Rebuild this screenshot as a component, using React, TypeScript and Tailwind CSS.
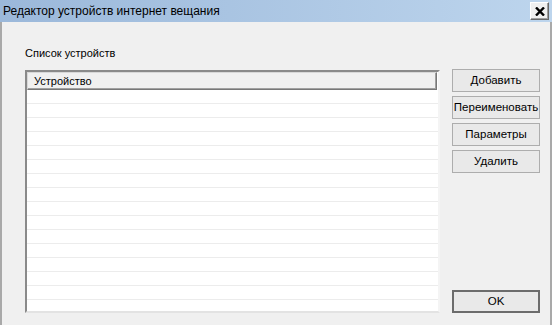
import React from 'react';

const sideButtons = ['Добавить', 'Переименовать', 'Параметры', 'Удалить'];

export default function App() {
  const rows = Array.from({ length: 16 }, (_, i) => i);

  return (
    <div
      className="w-[552px] h-[325px] flex flex-col bg-[#f0f0f0] overflow-hidden text-black"
      style={{ fontFamily: '"Liberation Sans", Arial, sans-serif' }}
    >
      {/* Title bar */}
      <div className="h-[22px] shrink-0 flex items-center justify-between bg-gradient-to-r from-[#9bb8da] to-[#bdd5ed] pl-[3px] pr-[3px]">
        <span className="text-[12px] leading-none">Редактор устройств интернет вещания</span>
        <button className="w-[19px] h-[18px] flex items-center justify-center bg-[#f0f0f0] border border-t-white border-l-white border-r-[#696969] border-b-[#696969] shadow-[inset_-1px_-1px_0_#a0a0a0]">
          <svg width="10" height="9" viewBox="0 0 10 9">
            <path d="M1 0.5 L9 8.5 M9 0.5 L1 8.5" stroke="#000" strokeWidth="2.4" />
          </svg>
        </button>
      </div>

      {/* Body */}
      <div className="flex-1 flex border-x-2 border-[#a9a9a9]">
        {/* Left: device list */}
        <div className="flex flex-col pl-[23px]">
          <div className="mt-[24px] h-[14px] text-[11px] leading-[14px]">Список устройств</div>
          <div className="mt-[10px] w-[415px] h-[243px] border-2 border-t-[#8a8a8a] border-l-[#8a8a8a] border-r-[#f4f4f4] border-b-[#e3e3e3] bg-white flex flex-col overflow-hidden">
            <div className="h-[18px] shrink-0 flex items-center bg-[#f0f0f0] border border-t-[#d8d8d8] border-l-[#d8d8d8] border-r-[#777] border-b-[#777] shadow-[inset_-1px_-1px_0_#a0a0a0] pl-[6px] mr-[1px]">
              <span className="text-[11px] leading-none">Устройство</span>
            </div>
            {rows.map((r) => (
              <div key={r} className="h-[14px] shrink-0 border-b border-[#ececec]" />
            ))}
          </div>
        </div>

        {/* Right: buttons */}
        <div className="flex flex-col ml-[12px] pt-[47px] pb-[12px] w-[88px]">
          <div className="flex flex-col gap-[4px]">
            {sideButtons.map((label) => (
              <button
                key={label}
                className="h-[23px] w-[88px] bg-[#e9e9e9] border border-[#adadad] text-[11.5px] leading-none flex items-center justify-center whitespace-nowrap"
              >
                {label}
              </button>
            ))}
          </div>
          <button className="mt-auto h-[23px] w-[88px] bg-[#e9e9e9] border-2 border-[#6c6c6c] text-[11.5px] leading-none flex items-center justify-center">
            OK
          </button>
        </div>
      </div>
    </div>
  );
}
